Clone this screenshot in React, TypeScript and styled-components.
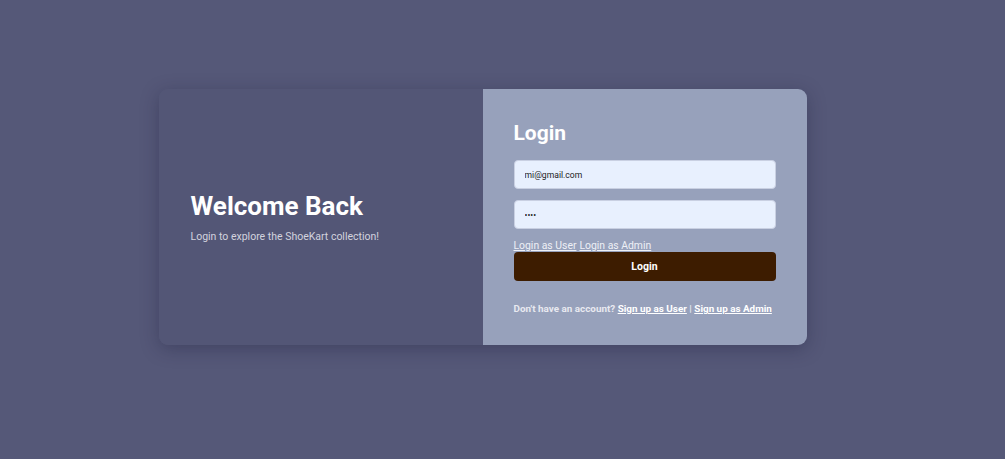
import React from "react";
import styled, { createGlobalStyle } from "styled-components";

const Global = createGlobalStyle`
  html, body { margin: 0; padding: 0; }
  body {
    background: #555878;
    font-family: Roboto, "Noto Sans", Arial, sans-serif;
  }
  * { box-sizing: border-box; }
`;

const Page = styled.div`
  min-height: 459px;
  display: flex;
  justify-content: center;
  align-items: flex-start;
  padding: 89px 40px 0 0;
`;

const Card = styled.div`
  width: 648px;
  height: 256px;
  display: grid;
  grid-template-columns: 324px 324px;
  border-radius: 9px;
  overflow: hidden;
  box-shadow: 0 4px 18px rgba(30, 30, 60, 0.35);
`;

const Side = styled.div`
  background: #535676;
  display: flex;
  flex-direction: column;
  justify-content: center;
  padding: 0 32px;
`;

const Title = styled.h1`
  margin: 0 0 9px;
  font-size: 26px;
  font-weight: 700;
  color: #ffffff;
  line-height: 30px;
`;

const Sub = styled.p`
  margin: 0;
  font-size: 10.5px;
  color: #d2d3de;
  line-height: 14px;
`;

const Main = styled.div`
  background: #97a1bb;
  padding: 31px 31px 0;
  display: flex;
  flex-direction: column;
`;

const FormTitle = styled.h2`
  margin: 0 0 14px;
  font-size: 21px;
  font-weight: 700;
  color: #ffffff;
  line-height: 26px;
`;

const Input = styled.input`
  width: 262px;
  height: 29px;
  border: 1px solid #c9d0e2;
  border-radius: 4px;
  background: #e8f0fe;
  padding: 0 10px;
  font-family: Roboto, Arial, sans-serif;
  font-size: 8.6px;
  color: #222;
  outline: none;
  margin-bottom: 11px;
`;

const LinkRow = styled.div`
  display: flex;
  gap: 3px;
  font-size: 10.4px;
  line-height: 12px;
`;

const TextLink = styled.a`
  color: #eef0f6;
  text-decoration: underline;
  cursor: pointer;
`;

const Button = styled.button`
  width: 262px;
  height: 29px;
  border: none;
  border-radius: 4px;
  background: #3d1c00;
  color: #ffffff;
  font-family: Roboto, Arial, sans-serif;
  font-weight: 700;
  font-size: 10.5px;
`;

const Footer = styled.p`
  margin: 22px 0 0;
  font-size: 9.9px;
  font-weight: 700;
  color: #e8e9f0;
  line-height: 12px;
`;

const FootLink = styled.a`
  color: #ffffff;
  text-decoration: underline;
`;

export default function App() {
  return (
    <>
      <Global />
      <Page>
        <Card>
          <Side>
            <Title>Welcome Back</Title>
            <Sub>Login to explore the ShoeKart collection!</Sub>
          </Side>
          <Main>
            <FormTitle>Login</FormTitle>
            <Input defaultValue="mi@gmail.com" />
            <Input type="password" defaultValue="1234" />
            <LinkRow>
              <TextLink>Login as User</TextLink>
              <TextLink>Login as Admin</TextLink>
            </LinkRow>
            <Button>Login</Button>
            <Footer>
              Don't have an account? <FootLink>Sign up as User</FootLink> |{" "}
              <FootLink>Sign up as Admin</FootLink>
            </Footer>
          </Main>
        </Card>
      </Page>
    </>
  );
}
